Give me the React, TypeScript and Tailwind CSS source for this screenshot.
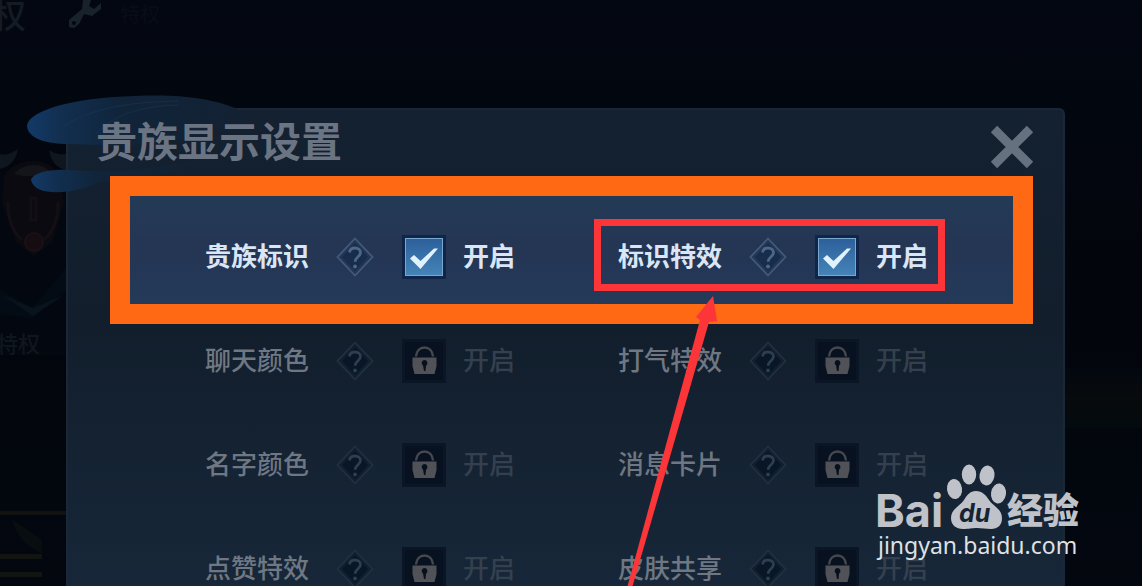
import { useState } from "react";

type Option = { id: string; name: string; locked?: boolean; marked?: boolean };

const activeOptions: Option[] = [
  { id: "badge", name: "贵族标识" },
  { id: "badge-fx", name: "标识特效", marked: true },
];

const lockedOptions: Option[] = [
  { id: "chat-color", name: "聊天颜色", locked: true },
  { id: "cheer-fx", name: "打气特效", locked: true },
  { id: "name-color", name: "名字颜色", locked: true },
  { id: "message-card", name: "消息卡片", locked: true },
  { id: "like-fx", name: "点赞特效", locked: true },
  { id: "skin-share", name: "皮肤共享", locked: true },
];

function HelpIcon({ dim }: { dim?: boolean }) {
  return (
    <svg viewBox="0 0 38 40" className={dim ? "w-[38px] h-10 text-[#213040]" : "w-[38px] h-10 text-[#415a78]"} fill="none" stroke="currentColor" aria-hidden="true">
      <path d="M19 1.5 36.5 20 19 38.5 1.5 20Z" fill={dim ? "#121f2e" : "#233655"} strokeWidth="1.8" />
      <path d="M19 6 32 20 19 34 6 20Z" fill={dim ? "#091626" : "#182c4b"} stroke="none" />
      <path d="M13.5 15.500c.3-3 2.600-4.500 5.500-4.500 3.300 0 5.500 1.800 5.500 4.500 0 4.200-5.300 4.300-5.300 9.200" stroke={dim ? "#2d3e51" : "#4c6887"} strokeWidth="2.800" />
      <circle cx="19" cy="29.500" r="2" fill={dim ? "#2d3e51" : "#4c6887"} stroke="none" />
    </svg>
  );
}

function CheckIcon() {
  return (
    <svg viewBox="0 0 44 44" className="pointer-events-none absolute inset-0 w-11 h-11" aria-hidden="true">
      <path d="M8 23.500 12 20 18.500 26 32 13.500 36 13.500 18.500 34Z" fill="#e2f2fc" />
    </svg>
  );
}

function LockIcon() {
  return (
    <svg viewBox="0 0 44 44" className="pointer-events-none absolute inset-0 w-11 h-11" aria-hidden="true">
      <path d="M14 17.500c.5-5.500 4-9 8.500-9s8 3.500 8.500 9" fill="none" stroke="#44484f" strokeWidth="2.400" />
      <path d="M10.500 18.500h24v8.500l-2 8h-20l-2-8Z" fill="#505258" />
      <path d="M22.500 21a3 3 0 0 1 1.600 5.500L23.500 32h-1.500l-1-5.500A3 3 0 0 1 22.500 21Z" fill="#07111e" />
    </svg>
  );
}

function OptionRow({ option }: { option: Option }) {
  const [checked, setChecked] = useState(!option.locked);

  return (
    <div className="relative flex items-center h-11">
      <span className={option.locked ? "w-[103px] pb-1 text-[26px] leading-10 whitespace-nowrap text-[#6f7783]" : "w-[103px] pb-1 text-[26px] leading-10 font-bold whitespace-nowrap text-[#dbe6f5]"}>
        {option.name}
      </span>
      <button type="button" aria-label={`${option.name}说明`} className="mx-7 shrink-0">
        <HelpIcon dim={option.locked} />
      </button>
      <label htmlFor={option.id} className="flex items-center gap-[17px] shrink-0">
        <span className="relative w-11 h-11">
          <input
            id={option.id}
            type="checkbox"
            checked={checked}
            disabled={option.locked}
            onChange={() => setChecked(!checked)}
            className="block appearance-none w-11 h-11 border-3 border-[#10254a] bg-[#15294a] checked:bg-linear-to-b checked:from-[#2d5f9a] checked:to-[#4585b8] checked:inset-ring checked:inset-ring-[#79a8cf] disabled:border-[#0a1625] disabled:bg-[#08111f]"
          />
          {option.locked ? <LockIcon /> : checked && <CheckIcon />}
        </span>
        <span className={option.locked ? "pb-1 text-[26px] leading-10 text-[#35404e]" : "pb-1 text-[26px] leading-10 font-bold text-[#dbe6f5]"}>开启</span>
      </label>

      {/* red marker around the option */}
      {option.marked && <div className="pointer-events-none absolute -left-6 right-6 -top-4 -bottom-3 border-7 border-[#fc3539]" />}
    </div>
  );
}

function Backdrop() {
  return (
    <div className="absolute inset-0 bg-linear-to-b from-[#030711] via-[#02050b] to-[#03070f]" aria-hidden="true">
      <span className="absolute -left-2 -top-2 text-[34px] leading-11 text-[#151b23]">权</span>
      <span className="absolute left-[120px] top-0 text-[20px] leading-7 text-[#070c16]">特权</span>
      <svg viewBox="0 0 34 30" className="absolute left-[68px] top-0 w-[34px] h-[30px]">
        <path d="M15 0 14 9 1 20v7l5 1 5-4 5-10 8 2 9-7V3l-7 6-5-3 2-6Z" fill="#19222b" />
        <circle cx="6" cy="23" r="2" fill="#030711" />
      </svg>
      <svg viewBox="0 0 66 446" className="absolute left-0 top-[140px] w-[66px] h-[446px]">
        <path d="M0 30h66v185H0Z" fill="#030810" />
        <path d="M0 14C8 16 13 12 18 9c-2 12-9 18-18 20ZM66 14c-7 1-12-1-17-4 2 12 8 18 17 20Z" fill="#10161d" />
        <path d="M4 36C16 16 50 16 60 36l4 26-12 40-18 14-18-14L2 62Z" fill="#0b0a11" />
        <path d="M14 34C24 22 44 22 52 34l-8 2H24Z" fill="#14151a" />
        <path d="M31 58h5v22h-5ZM8 62c0 18 4 28 14 38M58 62c0 18-4 28-14 38" fill="none" stroke="#130f14" strokeWidth="3" />
        <circle cx="34" cy="102" r="9" fill="#150d12" stroke="#1b1014" strokeWidth="2" />
        <path d="M0 150v24l32 4 34-28v-22L33 168Z" fill="#030c15" />
        <path d="M2 155 33 176 64 155 33 168Z" fill="#08131b" />
        <path d="M0 371h66v4H0Z" fill="#111310" />
        <path d="M12 379c4 18 14 26 30 35V400Z" fill="#080d10" />
        <path d="M0 414h42v5H0ZM0 432h42v5H0Z" fill="#121411" />
      </svg>
      <span className="absolute -left-1 top-[328px] text-[22px] leading-7 text-[#10161e]">特权</span>
      <div className="absolute right-0 top-[368px] w-[77px] h-[60px] bg-linear-to-b from-[#03080f] via-[#080a0c] to-[#030a0f]" />
    </div>
  );
}

function Wave() {
  return (
    <svg viewBox="0 0 360 110" className="absolute -left-[42px] -top-[16px] w-[360px] h-[110px]" aria-hidden="true">
      <defs>
        <linearGradient id="wave" x1="0" x2="1">
          <stop offset="0" stopColor="#123a67" />
          <stop offset=".14" stopColor="#122f50" />
          <stop offset=".4" stopColor="#10243a" />
          <stop offset="1" stopColor="#142131" />
        </linearGradient>
      </defs>
      <path d="M1 32C2 18 40 4 110 2c50-2 82 4 106 15h24C200 36 160 46 120 50 90 53 64 50 42 50 22 50 2 45 1 32Z" fill="url(#wave)" />
      <path d="M5 86c2-7 18-11 38-10 45 4 90-2 130-10-30 15-62 20-100 22-24 12-64 16-68-2Z" fill="url(#wave)" />
      <path d="M38 32C62 16 98 8 152 7M70 40C86 22 112 12 152 11" fill="none" stroke="#1d405f" strokeWidth="1" opacity=".4" />
    </svg>
  );
}

function Watermark() {
  return (
    <svg viewBox="870 460 216 104" className="absolute right-14 bottom-[22px] w-[216px] h-[104px]" fill="#bfc2c8" role="img" aria-label="Baidu 经验 jingyan.baidu.com">
      <text x="875" y="527" fontFamily="Inter, sans-serif" fontWeight="700" fontSize="45">Bai</text>
      <ellipse cx="954.500" cy="489" rx="7.500" ry="10" transform="rotate(-8 954.500 489)" />
      <ellipse cx="969" cy="474.500" rx="7.200" ry="10" />
      <ellipse cx="987" cy="475.500" rx="7.500" ry="10" transform="rotate(10 987 475.500)" />
      <ellipse cx="998.500" cy="493.500" rx="7.500" ry="10" transform="rotate(8 998.500 493.500)" />
      <path d="M976 491c-6 0-9 4-12 9-4 6-13 9-13 18 0 7 5 11 12 11 6 0 9-1 14-1s9 1 14 1c7 0 11-4 11-11 0-9-9-12-13-18-3-5-7-9-13-9Z" />
      <text x="959" y="522" fontFamily="Inter, sans-serif" fontWeight="700" fontStyle="italic" fontSize="25" fill="#152334">du</text>
      <text x="1007" y="524" fontFamily="Noto Sans CJK SC, sans-serif" fontWeight="900" fontSize="36">经验</text>
      <text x="878" y="554" fontFamily="Noto Sans, sans-serif" fontWeight="400" fontSize="23" fill="#dfe1e4">jingyan.baidu.com</text>
    </svg>
  );
}

export default function App() {
  return (
    <div className="relative h-screen overflow-hidden bg-[#02060d] font-['Noto_Sans_CJK_SC',sans-serif] font-medium">
      <Backdrop />

      <main className="relative h-full pt-[108px] pl-[66px] pr-[77px]">
        <section role="dialog" aria-labelledby="title" className="relative min-h-full rounded-t-md border-x-2 border-t-2 border-[#1b2736] bg-linear-to-b from-[#142131] via-[#121e2c] via-45% to-[#172739]">
          <Wave />
          <header className="relative flex items-center justify-between h-[66px] pl-7 pr-7">
            <h1 id="title" className="pb-2 text-[41px] leading-none font-bold whitespace-nowrap text-[#6b7482]">贵族显示设置</h1>
            <button type="button" aria-label="关闭" className="mt-2">
              <svg viewBox="0 0 46 46" className="w-[46px] h-[46px]" stroke="#65717f" strokeWidth="9" aria-hidden="true">
                <path d="M5 5 41 41M41 5 5 41" />
              </svg>
            </button>
          </header>

          {/* available options */}
          <div className="relative ml-[42px] mr-[30px] grid grid-cols-2 gap-x-[62px] border-20 border-[#ff6914] bg-linear-to-b from-[#233b57] via-[#253554] to-[#243a59] pt-[39px] pb-[25px] pl-[75px] pr-11">
            {activeOptions.map((option) => (
              <OptionRow key={option.id} option={option} />
            ))}
          </div>

          {/* locked options */}
          <div className="grid grid-cols-2 gap-x-[62px] gap-y-[60px] pt-[15px] pl-[137px] pr-[94px]">
            {lockedOptions.map((option) => (
              <OptionRow key={option.id} option={option} />
            ))}
          </div>
        </section>
      </main>

      {/* arrow to the marked option */}
      <svg viewBox="0 0 100 300" className="pointer-events-none absolute left-[622px] top-[296px] w-[100px] h-[300px]" fill="#fc3539" aria-hidden="true">
        <path d="M91 0 95 25 87 26 10 292 5 292 78 24 74 21Z" />
      </svg>
      <Watermark />
    </div>
  );
}
